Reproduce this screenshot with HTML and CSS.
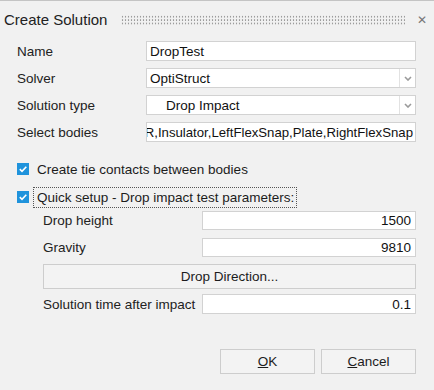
FILE: index.html
```html
<!DOCTYPE html>
<html>
  <head>
    <title>Create Solution</title>
    <link rel="stylesheet" href="styles.css">
  </head>
  <body>
    <div class="dialog">
      <div class="titlebar">
        <span class="title">Create Solution</span>
        <span class="grip"></span>
        <span class="close">&#x2715;</span>
      </div>

      <div class="form">
        <label>Name</label>
        <div class="field">DropTest</div>

        <label>Solver</label>
        <div class="field combo">
          <span class="value">OptiStruct</span>
          <span class="arrow"><svg width="8" height="5" viewBox="0 0 8 5"><path d="M1 1 L4 4 L7 1" fill="none" stroke="#9a9a9a" stroke-width="1.6"/></svg></span>
        </div>

        <label>Solution type</label>
        <div class="field combo">
          <span class="value indent">Drop Impact</span>
          <span class="arrow"><svg width="8" height="5" viewBox="0 0 8 5"><path d="M1 1 L4 4 L7 1" fill="none" stroke="#9a9a9a" stroke-width="1.6"/></svg></span>
        </div>

        <label>Select bodies</label>
        <div class="field clip"><span>R,Insulator,LeftFlexSnap,Plate,RightFlexSnap</span></div>
      </div>

      <div class="checks">
        <div class="check">
          <span class="box"><svg width="12" height="12" viewBox="0 0 12 12"><path d="M2.8 6.2 L5 8.3 L9.3 3.8" fill="none" stroke="#fff" stroke-width="1.6"/></svg></span>
          <span class="text">Create tie contacts between bodies</span>
        </div>
        <div class="check">
          <span class="box"><svg width="12" height="12" viewBox="0 0 12 12"><path d="M2.8 6.2 L5 8.3 L9.3 3.8" fill="none" stroke="#fff" stroke-width="1.6"/></svg></span>
          <span class="text focus">Quick setup - Drop impact test parameters:</span>
        </div>
      </div>

      <div class="sub">
        <div class="row">
          <label>Drop height</label>
          <div class="field num">1500</div>
        </div>
        <div class="row gap8">
          <label>Gravity</label>
          <div class="field num">9810</div>
        </div>
        <button class="wide">Drop Direction...</button>
        <div class="row gap5 tall">
          <label>Solution time after impact</label>
          <div class="field num">0.1</div>
        </div>
      </div>

      <div class="actions">
        <button class="btn"><u>O</u>K</button>
        <button class="btn"><u>C</u>ancel</button>
      </div>
    </div>
  </body>
</html>
```

FILE: styles.css
```css
body {
  margin: 0;
  background: #f0f0f0;
  font-family: "Liberation Sans", Arial, sans-serif;
  font-size: 13.5px;
  color: #1c1c1c;
}

.dialog {
  width: 434px;
  height: 390px;
  box-sizing: border-box;
  border-top: 1px solid #c4c4c4;
  background: #f1f1f1;
}

/* title bar */

.titlebar {
  height: 37px;
  display: flex;
  align-items: center;
  padding-left: 4px;
}

.title {
  font-size: 15px;
  color: #222;
  width: 117px;
}

.grip {
  width: 284px;
  height: 10px;
  margin-top: 1px;
  background-image: radial-gradient(circle, #9c9c9c 0.8px, transparent 1.1px);
  background-size: 3px 3.4px;
}

.close {
  margin-left: 12px;
  font-size: 12px;
  color: #777;
}

/* top form */

.form {
  display: grid;
  grid-template-columns: 129px 270px;
  grid-auto-rows: 20px;
  row-gap: 7px;
  padding-left: 17px;
  margin-top: 3px;
}

label {
  display: flex;
  align-items: center;
  color: #222;
}

.field {
  box-sizing: border-box;
  background: #fff;
  border: 1px solid #d2d2d2;
  display: flex;
  align-items: center;
  padding: 0 3px;
  color: #111;
  white-space: nowrap;
  overflow: hidden;
}

.combo {
  padding-right: 0;
}

.combo .value {
  flex: 1;
}

.combo .indent {
  padding-left: 16px;
}

.arrow {
  width: 15px;
  height: 100%;
  border-left: 1px solid #e2e2e2;
  display: flex;
  align-items: center;
  justify-content: center;
}

.clip {
  justify-content: flex-end;
  font-size: 13.2px;
  padding: 0 2px;
}

/* check boxes */

.checks {
  display: flex;
  flex-direction: column;
  gap: 8px;
  margin-top: 17px;
  padding-left: 17px;
}

.check {
  height: 20px;
  display: flex;
  align-items: center;
}

.box {
  width: 12px;
  height: 12px;
  background: #1f93dc;
  display: flex;
  margin-right: 4px;
}

.text {
  padding: 2px 2px 2px 3px;
  border: 1px dotted transparent;
}

.focus {
  border-color: #555;
}

/* drop parameters */

.sub {
  display: flex;
  flex-direction: column;
  width: 373px;
  margin-left: 43px;
  margin-top: 4px;
}

.row {
  display: flex;
  height: 19px;
}

.row label {
  width: 159px;
}

.row .field {
  flex: 1;
}

.num {
  justify-content: flex-end;
  padding-right: 4px;
}

.gap8 {
  margin-top: 8px;
}

.gap5 {
  margin-top: 5px;
}

.tall {
  height: 20px;
}

button {
  font-family: "Liberation Sans", Arial, sans-serif;
  font-size: 13.5px;
  color: #1c1c1c;
  background: #f3f3f3;
  border: 1px solid #cdcdcd;
  padding: 0;
}

.wide {
  height: 25px;
  margin-top: 7px;
}

/* bottom buttons */

.actions {
  display: flex;
  justify-content: flex-end;
  gap: 6px;
  padding-right: 18px;
  margin-top: 35px;
}

.btn {
  width: 95px;
  height: 25px;
}
```
